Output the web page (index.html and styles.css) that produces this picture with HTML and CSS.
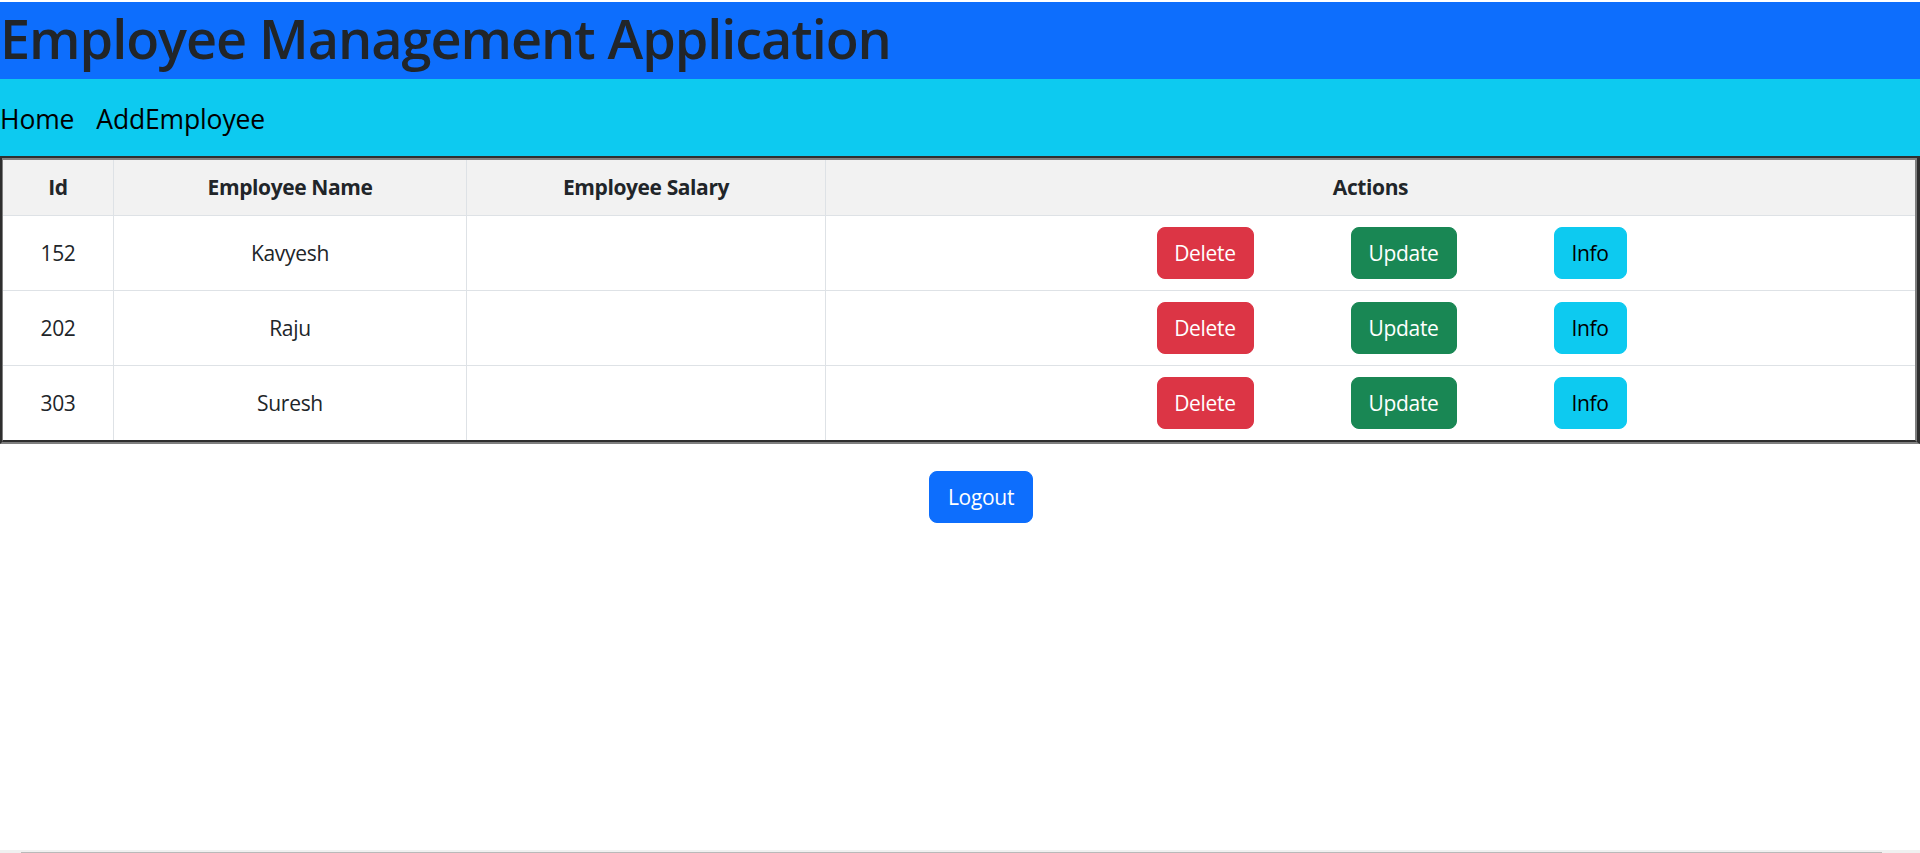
FILE: index.html
```html
<!DOCTYPE html>
<html lang="en">
<head>
<meta charset="utf-8">
<title>Employee Management Application</title>
<link rel="stylesheet" href="styles.css">
</head>
<body>
<div class="app">
  <header class="app-header">
    <h1 class="app-title">Employee Management Application</h1>
  </header>
  <nav class="app-nav">
    <a class="nav-link" href="#">Home</a>
    <a class="nav-link" href="#">AddEmployee</a>
  </nav>
  <div class="table-frame">
    <div class="table-frame-inner">
      <table class="emp-table">
        <thead>
          <tr>
            <th class="col-id">Id</th>
            <th class="col-name">Employee Name</th>
            <th class="col-salary">Employee Salary</th>
            <th class="col-actions">Actions</th>
          </tr>
        </thead>
        <tbody>
          <tr>
            <td>152</td>
            <td>Kavyesh</td>
            <td></td>
            <td class="actions-cell"><div class="actions"><button class="btn btn-danger">Delete</button><button class="btn btn-success">Update</button><button class="btn btn-info">Info</button></div></td>
          </tr>
          <tr>
            <td>202</td>
            <td>Raju</td>
            <td></td>
            <td class="actions-cell"><div class="actions"><button class="btn btn-danger">Delete</button><button class="btn btn-success">Update</button><button class="btn btn-info">Info</button></div></td>
          </tr>
          <tr class="last-row">
            <td>303</td>
            <td>Suresh</td>
            <td></td>
            <td class="actions-cell"><div class="actions"><button class="btn btn-danger">Delete</button><button class="btn btn-success">Update</button><button class="btn btn-info">Info</button></div></td>
          </tr>
        </tbody>
      </table>
    </div>
  </div>
  <div class="logout-row">
    <button class="btn btn-primary">Logout</button>
  </div>
</div>
<div class="hscroll"><div class="hscroll-thumb"></div></div>
</body>
</html>
```
FILE: styles.css
```css
* { box-sizing: border-box; }

html, body {
  margin: 0;
  padding: 0;
  background: #ffffff;
}

body {
  font-family: "Open Sans", "Noto Sans", sans-serif;
  font-size: 21px;
  color: #212529;
  overflow: hidden;
}

.app {
  padding-top: 2px;
}

.app-header {
  background: #0d6efd;
  height: 77px;
  display: flex;
  align-items: center;
}

.app-title {
  margin: 0;
  font-weight: 600;
  font-size: 54px;
  line-height: 66px;
  letter-spacing: -1.05px;
  color: #212529;
  padding-bottom: 5px;
}

.app-nav {
  background: #0dcaf0;
  height: 77px;
  display: flex;
  align-items: center;
  gap: 22px;
}

.nav-link {
  color: #000000;
  text-decoration: none;
  font-size: 26.5px;
  letter-spacing: -0.15px;
  padding-top: 3px;
}

.table-frame {
  border-style: solid;
  border-width: 2px 3px 2px 2px;
  border-color: #2e2e2e #2e2e2e #7f7f7f #2e2e2e;
}

.table-frame-inner {
  border-style: solid;
  border-width: 2px 2px 2px 1px;
  border-color: #7f7f7f #7f7f7f #2e2e2e #7f7f7f;
}

.emp-table {
  width: 100%;
  border-collapse: separate;
  border-spacing: 0;
  table-layout: fixed;
}

.emp-table th,
.emp-table td {
  text-align: center;
  vertical-align: middle;
  padding: 11px;
  line-height: 33px;
  border-right: 1px solid #dee2e6;
  border-bottom: 1px solid #dee2e6;
}

.emp-table th:last-child,
.emp-table td:last-child {
  border-right: none;
}

.emp-table .last-row td {
  border-bottom: none;
}

.emp-table th {
  background: #f2f2f2;
  font-weight: 700;
  letter-spacing: -0.4px;
}

.emp-table td {
  font-weight: 400;
  letter-spacing: -0.3px;
}

.col-id { width: 111px; }
.col-name { width: 353px; }
.col-salary { width: 359px; }

.actions {
  display: flex;
  justify-content: center;
  gap: 97px;
  padding-left: 42px;
}

.btn {
  font-family: "Open Sans", "Noto Sans", sans-serif;
  font-size: 21px;
  letter-spacing: -0.3px;
  line-height: 33px;
  padding: 8.5px 16px;
  border: 1px solid transparent;
  border-radius: 8px;
  cursor: pointer;
}

.btn-danger { background: #dc3545; border-color: #dc3545; color: #ffffff; width: 97px; }
.btn-success { background: #198754; border-color: #198754; color: #ffffff; width: 106px; }
.btn-info { background: #0dcaf0; border-color: #0dcaf0; color: #000000; width: 73px; }
.btn-primary { background: #0d6efd; border-color: #0d6efd; color: #ffffff; width: 104px; }

.logout-row {
  display: flex;
  justify-content: center;
  padding-left: 42px;
  margin-top: 27px;
}

.hscroll {
  position: fixed;
  left: 0;
  right: 0;
  bottom: 0;
  height: 3px;
  background: #f0f0f0;
}

.hscroll-thumb {
  position: absolute;
  left: 21px;
  right: 38px;
  top: 2px;
  height: 1px;
  background: #b9b9b9;
}
```
